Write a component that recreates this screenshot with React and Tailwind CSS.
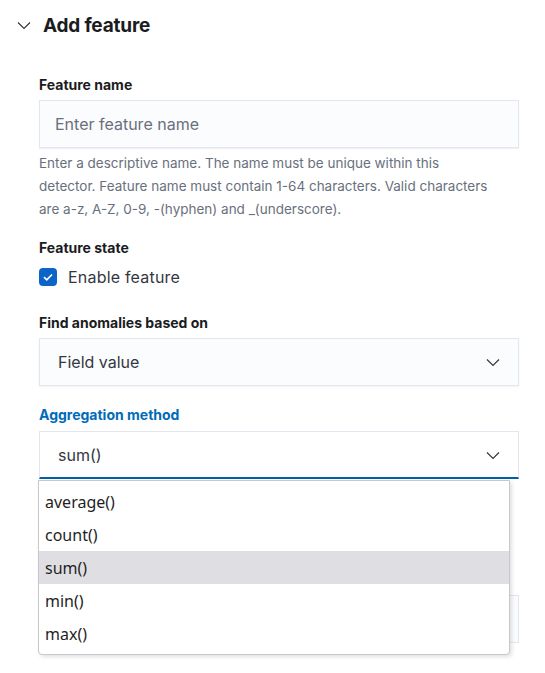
import React from "react";

const Chevron = ({ className }) => (
  <svg className={className} width="16" height="16" viewBox="0 0 16 16" fill="none">
    <path d="M2 5.5 L8 11.5 L14 5.5" stroke="#343741" strokeWidth="1.2" />
  </svg>
);

export default function App() {
  const font = { fontFamily: "Inter, 'Noto Sans', sans-serif" };
  return (
    <div className="w-[545px] h-[673px] bg-white overflow-hidden relative" style={font}>
      <div className="h-[50px] flex items-center pl-[16px]">
        <Chevron className="w-[16px] h-[16px]" />
        <h2 className="ml-[11px] text-[19px] font-bold text-[#1a1c21] leading-none tracking-[-0.2px]">Add feature</h2>
      </div>

      <div className="pl-[39px] w-[519px]">
        <div className="mt-[25px] h-[20px] leading-[20px] text-[14px] font-bold text-[#1a1c21]">Feature name</div>
        <div className="mt-[5px] h-[48px] w-[480px] bg-[#fbfcfd] border border-[#e3e6ee] shadow-[0_1px_1px_rgba(0,0,0,0.05)] flex items-center pl-[15px] text-[16px] text-[#69707d]">
          Enter feature name
        </div>
        <p className="mt-[4px] text-[13.5px] leading-[23px] text-[#69707d] w-[458px]">
          Enter a descriptive name. The name must be unique within this detector. Feature name must contain 1-64 characters. Valid characters are a-z, A-Z, 0-9, -(hyphen) and _(underscore).
        </p>

        <div className="mt-[17px] h-[20px] leading-[20px] text-[14px] font-bold text-[#1a1c21]">Feature state</div>
        <div className="mt-[10px] h-[18px] flex items-center">
          <div className="w-[18px] h-[18px] rounded-[4px] bg-[#0b64c8] flex items-center justify-center">
            <svg width="14" height="14" viewBox="0 0 14 14" fill="none">
              <path d="M3 7.2 L5.8 9.8 L11 4.5" stroke="white" strokeWidth="1.7" />
            </svg>
          </div>
          <span className="ml-[11px] text-[16px] text-[#343741] tracking-[0.2px]">Enable feature</span>
        </div>

        <div className="mt-[27px] h-[20px] leading-[20px] text-[14px] font-bold text-[#1a1c21]">Find anomalies based on</div>
        <div className="mt-[5px] h-[48px] w-[480px] bg-[#fbfcfd] border border-[#e3e6ee] shadow-[0_1px_2px_rgba(0,0,0,0.06)] flex items-center justify-between pl-[18px] pr-[17px] text-[16px] text-[#343741]">
          <span>Field value</span>
          <Chevron className="w-[16px] h-[16px]" />
        </div>

        <div className="mt-[19px] h-[20px] leading-[20px] text-[14px] font-bold text-[#006bb8]">Aggregation method</div>
        <div className="mt-[6px] h-[48px] w-[480px] bg-white border border-[#e3e6ee] border-b-2 border-b-[#0061a6] flex items-center justify-between pl-[18px] pr-[17px] text-[16px] text-[#343741]">
          <span>sum()</span>
          <Chevron className="w-[16px] h-[16px]" />
        </div>

        <div className="mt-[116px] h-[48px] w-[480px] bg-[#fbfcfd] border border-[#e3e6ee]"></div>
      </div>

      <div
        className="absolute left-[38px] top-[480px] w-[472px] h-[175px] bg-white border border-[#c8c8cc] rounded-b-[4px] shadow-[2px_2px_4px_rgba(0,0,0,0.12)] py-[4px]"
        style={{ fontFamily: "'Noto Sans', 'Open Sans', sans-serif" }}
      >
        {["average()", "count()", "sum()", "min()", "max()"].map((t) => (
          <div
            key={t}
            className={
              "h-[33px] flex items-center pl-[6px] text-[16px] text-[#1f1f1f] " +
              (t === "sum()" ? "bg-[#dfdfe3]" : "")
            }
          >
            {t}
          </div>
        ))}
      </div>
    </div>
  );
}
